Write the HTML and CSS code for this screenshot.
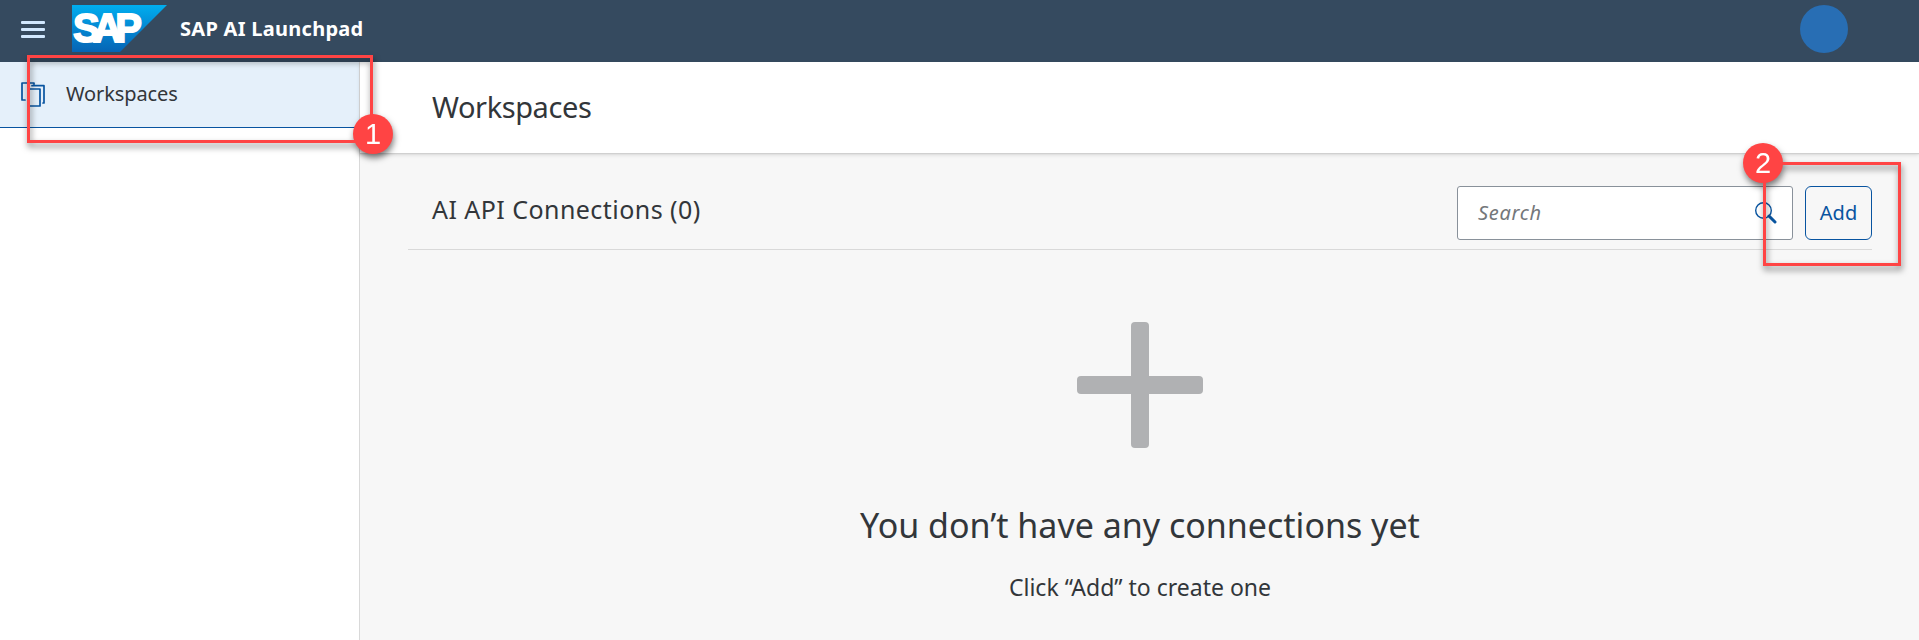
FILE: index.html
```html
<!DOCTYPE html>
<html lang="en">
<head>
<meta charset="utf-8">
<title>SAP AI Launchpad</title>
<link rel="stylesheet" href="styles.css">
</head>
<body>
<div class="app">
  <header class="shell">
    <svg class="menu" width="24" height="17" viewBox="0 0 24 17" fill="#d1e8ff"><rect width="24" height="3" rx="1"/><rect y="7" width="24" height="3" rx="1"/><rect y="14" width="24" height="3" rx="1"/></svg>
    <svg class="logo" width="95" height="47" viewBox="0 0 95 47">
      <defs><linearGradient id="blue" x1="0" y1="0" x2="0" y2="1"><stop offset="0" stop-color="#00aeef"/><stop offset=".5" stop-color="#0487d2"/><stop offset="1" stop-color="#0664b4"/></linearGradient></defs>
      <path d="M0 0H95L48 47H0Z" fill="url(#blue)"/>
      <text class="logo-text" x="1" y="37" textLength="69" lengthAdjust="spacing">SAP</text>
    </svg>
    <span class="product">SAP AI Launchpad</span>
    <span class="avatar"></span>
  </header>
  <div class="body">
    <nav class="side">
      <a class="nav-item">
        <svg width="24" height="25" viewBox="0 0 24 25" fill="none" stroke="#0854a0" stroke-width="1.700" stroke-linejoin="round" stroke-linecap="round"><path d="M4 18H1V1H13V2M8 7H19V24H8ZM11 3.700H23V21H22"/></svg>
        <span>Workspaces</span>
      </a>
    </nav>
    <main class="main">
      <div class="page-head"><h1>Workspaces</h1></div>
      <section class="content">
        <div class="toolbar">
          <h2>AI API Connections (0)</h2>
          <div class="search"><span>Search</span>
            <svg width="22" height="22" viewBox="0 0 22 22" fill="none" stroke="#0854a0"><circle cx="8.500" cy="8.500" r="7.800" stroke-width="1.400"/><path d="M14 14L20 20" stroke-width="3" stroke-linecap="round"/></svg>
          </div>
          <button class="add">Add</button>
        </div>
        <div class="empty">
          <svg width="126" height="126" viewBox="0 0 126 126" fill="#b0b1b3"><rect x="54" width="18" height="126" rx="4"/><rect y="54" width="126" height="18" rx="4"/></svg>
          <h3>You don’t have any connections yet</h3>
          <p>Click “Add” to create one</p>
        </div>
      </section>
    </main>
  </div>
  <div class="mark mark-one"><span class="badge">1</span></div>
  <div class="mark mark-two"><span class="badge">2</span></div>
</div>
</body>
</html>
```
FILE: styles.css
```css
* { box-sizing: border-box; }
body { margin: 0; font-family: "Noto Sans", "Liberation Sans", sans-serif; color: #32363a; }
h1, h2, h3, p { margin: 0; font-weight: 400; white-space: nowrap; }
svg { display: block; flex: none; }
.app { position: relative; height: 640px; overflow: hidden; display: flex; flex-direction: column; }
.shell { height: 62px; flex: none; background: #354a5f; display: flex; align-items: flex-start; padding: 5px 71px 0 21px; }
.menu { margin-top: 16px; }
.logo { margin-left: 27px; }
.logo-text { font: 700 40px "Liberation Sans", sans-serif; fill: #fff; stroke: #fff; stroke-width: 1.8px; }
.product { margin: 12px 0 0 13px; font-size: 20px; line-height: 24px; font-weight: 700; color: #fff; letter-spacing: .28px; }
.avatar { width: 48px; height: 48px; border-radius: 50%; background: #286eb4; margin-left: auto; }
.body { flex: 1; display: flex; }
.side { width: 360px; flex: none; border-right: 1px solid #d9d9d9; background: #fff; }
.nav-item { height: 66px; display: flex; align-items: center; gap: 21px; padding: 0 0 1px 21px; background: #e5f0fa; border-bottom: 1px solid #0854a0; font-size: 20px; letter-spacing: -.12px; }
.nav-item span { padding-bottom: 2px; }
.main { flex: 1; display: flex; flex-direction: column; background: #f7f7f7; }
.page-head { height: 91px; background: #fff; box-shadow: 0 1px 1px #d0d0d0, 0 2px 4px rgba(0,0,0,.12); padding: 27px 0 0 72px; }
h1 { font-size: 29px; line-height: 36px; letter-spacing: -.42px; }
.content { padding: 33px 47px 0 48px; }
.toolbar { height: 64px; display: flex; align-items: flex-start; border-bottom: 1px solid #d9d9d9; padding-left: 24px; }
h2 { font-size: 25px; line-height: 30px; margin: 8px auto 0 0; letter-spacing: .45px; }
.search { width: 336px; height: 54px; border: 1px solid #89919a; border-radius: 3px; background: #fff; display: flex; align-items: center; justify-content: space-between; padding: 0 15px 0 20px; font-size: 20px; font-style: italic; letter-spacing: .7px; color: #74777a; }
.search span { padding-bottom: 2px; }
.add { width: 67px; height: 54px; margin-left: 12px; padding: 0 0 2px; border: 1px solid #0854a0; border-radius: 6px; background: #f7f7f7; color: #0854a0; font: 20px "Noto Sans", sans-serif; }
.empty { display: flex; flex-direction: column; align-items: center; padding-top: 72px; }
h3 { font-size: 34px; line-height: 42px; margin-top: 56px; }
p { font-size: 23px; line-height: 30px; margin-top: 26px; }
.mark { position: absolute; border: 3px solid #ff4444; filter: drop-shadow(1px 4px 3px rgba(0,0,0,.5)); }
.mark-one { left: 27px; top: 55px; width: 346px; height: 88px; }
.mark-two { left: 1763px; top: 162px; width: 138px; height: 104px; }
.badge { position: absolute; width: 40px; height: 40px; border-radius: 50%; background: #ff4444; color: #fff; font: 29px/41px "Liberation Sans", sans-serif; text-align: center; }
.mark-one .badge { right: -23px; bottom: -14px; }
.mark-two .badge { left: -23px; top: -22px; }
```
